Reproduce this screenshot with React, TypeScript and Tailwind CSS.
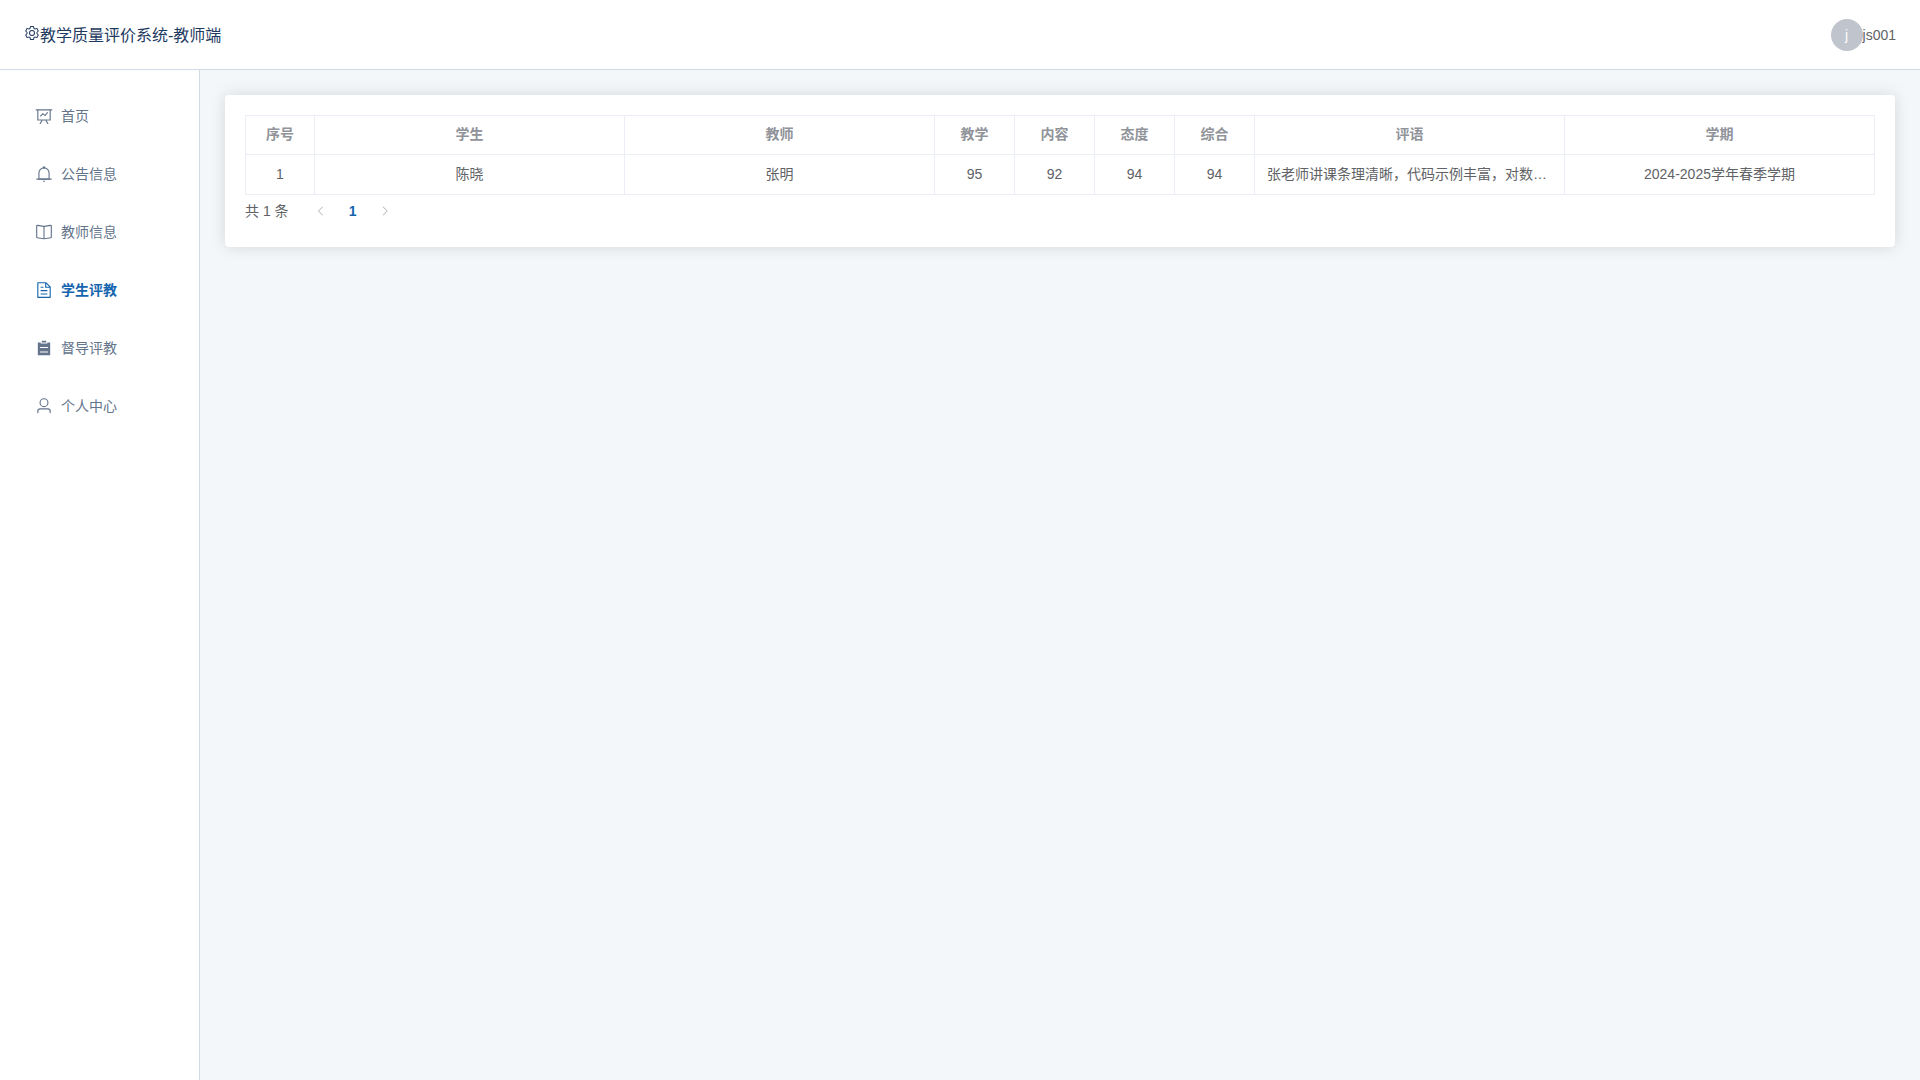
import type { ReactNode } from 'react'

interface IconProps {
  paths: string[]
  className?: string
}

interface MenuItem {
  label: string
  icon: string[]
  active?: boolean
}

interface Evaluation {
  id: number
  student: string
  teacher: string
  teaching: number
  content: number
  attitude: number
  overall: number
  comment: string
  term: string
}

const icons = {
  setting: [
    'M600.704 64a32 32 0 0 1 30.464 22.208l35.2 109.376c14.784 7.232 28.928 15.36 42.432 24.512l112.384-24.192a32 32 0 0 1 34.432 15.36L944.32 364.8a32 32 0 0 1-4.032 37.504l-77.12 85.12a357.12 357.12 0 0 1 0 49.024l77.12 85.248a32 32 0 0 1 4.032 37.504l-88.704 153.6a32 32 0 0 1-34.432 15.296L708.8 803.904c-13.44 9.088-27.648 17.28-42.368 24.512l-35.264 109.376A32 32 0 0 1 600.704 960H423.296a32 32 0 0 1-30.464-22.208L357.696 828.48a351.616 351.616 0 0 1-42.56-24.64l-112.32 24.256a32 32 0 0 1-34.432-15.36L79.68 659.2a32 32 0 0 1 4.032-37.504l77.12-85.248a357.12 357.12 0 0 1 0-48.896l-77.12-85.248A32 32 0 0 1 79.68 364.8l88.704-153.6a32 32 0 0 1 34.432-15.296l112.32 24.256c13.568-9.152 27.776-17.408 42.56-24.64l35.2-109.312A32 32 0 0 1 423.232 64H600.64zm-23.424 64H446.72l-36.352 113.088-24.512 11.968a294.113 294.113 0 0 0-34.816 20.096l-22.656 15.36-116.224-25.088-65.28 113.152 79.68 88.192-1.92 27.136a293.12 293.12 0 0 0 0 40.192l1.92 27.136-79.808 88.192 65.344 113.152 116.224-25.024 22.656 15.296a294.113 294.113 0 0 0 34.816 20.096l24.512 11.968L446.72 896h130.688l36.48-113.152 24.448-11.904a288.282 288.282 0 0 0 34.752-20.096l22.592-15.296 116.288 25.024 65.28-113.152-79.744-88.192 1.92-27.136a293.12 293.12 0 0 0 0-40.256l-1.92-27.136 79.808-88.128-65.344-113.152-116.288 24.96-22.592-15.232a287.616 287.616 0 0 0-34.752-20.096l-24.448-11.904L577.344 128zM512 320a192 192 0 1 1 0 384 192 192 0 0 1 0-384m0 64a128 128 0 1 0 0 256 128 128 0 0 0 0-256',
  ],
  dataLine: [
    'M359.168 768H160a32 32 0 0 1-32-32V192H64a32 32 0 0 1 0-64h896a32 32 0 1 1 0 64h-64v544a32 32 0 0 1-32 32H665.216l110.848 192h-73.856L591.36 768H433.024L322.176 960H248.32zM832 192H192v512h640zM342.656 534.656a32 32 0 1 1-45.312-45.312L444.992 341.76l125.44 94.08L679.04 300.032a32 32 0 1 1 49.92 39.936L581.632 524.224 451.008 426.24 342.656 534.592z',
  ],
  bell: [
    'M512 64a64 64 0 0 1 64 64v64H448v-64a64 64 0 0 1 64-64',
    'M256 768h512V448a256 256 0 1 0-512 0zm256-640a320 320 0 0 1 320 320v384H192V448a320 320 0 0 1 320-320',
    'M96 768h832q32 0 32 32t-32 32H96q-32 0-32-32t32-32m352 128h128a64 64 0 0 1-128 0',
  ],
  reading: [
    'm512 863.36 384-54.848v-638.72L525.568 222.72a96 96 0 0 1-27.136 0L128 169.792v638.72zM137.024 106.432l370.432 52.928a32 32 0 0 0 9.088 0l370.432-52.928A64 64 0 0 1 960 169.792v638.72a64 64 0 0 1-54.976 63.36l-388.48 55.488a32 32 0 0 1-9.088 0l-388.48-55.488A64 64 0 0 1 64 808.512v-638.72a64 64 0 0 1 73.024-63.36',
    'M480 192h64v704h-64z',
  ],
  document: [
    'M832 384H576V128H192v768h640zm-26.496-64L640 154.496V320zM160 64h480l256 256v608a32 32 0 0 1-32 32H160a32 32 0 0 1-32-32V96a32 32 0 0 1 32-32m160 448h384v64H320zm0-192h160v64H320zm0 384h384v64H320z',
  ],
  list: ['M704 192h160v736H160V192h160v64h384zM288 512h448v-64H288zm0 256h448v-64H288zm96-576V96h256v96z'],
  user: [
    'M512 512a192 192 0 1 0 0-384 192 192 0 0 0 0 384m0 64a256 256 0 1 1 0-512 256 256 0 0 1 0 512m320 320v-96a96 96 0 0 0-96-96H288a96 96 0 0 0-96 96v96a32 32 0 1 1-64 0v-96a160 160 0 0 1 160-160h448a160 160 0 0 1 160 160v96a32 32 0 1 1-64 0',
  ],
  arrowLeft: [
    'M609.408 149.376 277.76 489.6a32 32 0 0 0 0 44.672l331.648 340.352a29.12 29.12 0 0 0 41.728 0 30.592 30.592 0 0 0 0-42.752L339.264 511.936l311.872-319.872a30.592 30.592 0 0 0 0-42.688 29.12 29.12 0 0 0-41.728 0',
  ],
  arrowRight: [
    'M340.864 149.312a30.592 30.592 0 0 0 0 42.752L652.736 512 340.864 831.872a30.592 30.592 0 0 0 0 42.752 29.12 29.12 0 0 0 41.728 0L714.24 534.336a32 32 0 0 0 0-44.672L382.592 149.376a29.12 29.12 0 0 0-41.728 0',
  ],
}

const menu: MenuItem[] = [
  { label: '首页', icon: icons.dataLine },
  { label: '公告信息', icon: icons.bell },
  { label: '教师信息', icon: icons.reading },
  { label: '学生评教', icon: icons.document, active: true },
  { label: '督导评教', icon: icons.list },
  { label: '个人中心', icon: icons.user },
]

const evaluations: Evaluation[] = [
  {
    id: 1,
    student: '陈晓',
    teacher: '张明',
    teaching: 95,
    content: 92,
    attitude: 94,
    overall: 94,
    comment: '张老师讲课条理清晰，代码示例丰富，对数据结构',
    term: '2024-2025学年春季学期',
  },
]

// Columns without a width share what is left
const columns: { key: keyof Evaluation; title: string; width?: string }[] = [
  { key: 'id', title: '序号', width: 'w-[69px]' },
  { key: 'student', title: '学生' },
  { key: 'teacher', title: '教师' },
  { key: 'teaching', title: '教学', width: 'w-20' },
  { key: 'content', title: '内容', width: 'w-20' },
  { key: 'attitude', title: '态度', width: 'w-20' },
  { key: 'overall', title: '综合', width: 'w-20' },
  { key: 'comment', title: '评语' },
  { key: 'term', title: '学期' },
]

function Icon({ paths, className }: IconProps) {
  return (
    <svg viewBox="0 0 1024 1024" fill="currentColor" aria-hidden="true" className={className}>
      {paths.map((d) => (
        <path key={d} d={d} />
      ))}
    </svg>
  )
}

function Header() {
  return (
    <header className="flex h-[70px] items-center justify-between border-b border-[#cfdce8] bg-white px-6">
      <h1 className="flex items-center pt-0.5 text-base text-[#1e3a5f]">
        <Icon paths={icons.setting} className="mb-1.5 size-4" />
        教学质量评价系统-教师端
      </h1>
      <button type="button" className="flex items-center text-sm text-[#606266]">
        <span className="flex size-8 items-center justify-center rounded-full bg-[#c0c4cc] text-white">j</span>
        js001
      </button>
    </header>
  )
}

function Sidebar() {
  return (
    <nav className="w-[200px] shrink-0 border-r border-[#cfdce8] bg-white px-3 py-[21px]">
      <ul className="flex flex-col gap-2">
        {menu.map((item) => (
          <li key={item.label}>
            <a
              href="#"
              aria-current={item.active ? 'page' : undefined}
              className={`flex h-[50px] items-center gap-2 pl-[23px] text-sm ${
                item.active ? 'font-bold text-[#1565ae]' : 'text-[#64748b]'
              }`}
            >
              <Icon paths={item.icon} className="size-[18px]" />
              {item.label}
            </a>
          </li>
        ))}
      </ul>
    </nav>
  )
}

function EvaluationTable() {
  return (
    <table className="w-full table-fixed border-separate border-spacing-0 border-t border-l border-[#ebeef5] text-center text-sm">
      <thead>
        <tr>
          {columns.map((col) => (
            <th
              key={col.key}
              className={`h-[39px] border-r border-b border-[#ebeef5] px-3 pb-0.5 font-bold text-[#909399] ${col.width ?? ''}`}
            >
              {col.title}
            </th>
          ))}
        </tr>
      </thead>
      <tbody>
        {evaluations.map((row) => (
          <tr key={row.id}>
            {columns.map((col) => (
              <td key={col.key} className="h-10 truncate border-r border-b border-[#ebeef5] px-3 pb-0.5">
                {row[col.key]}
              </td>
            ))}
          </tr>
        ))}
      </tbody>
    </table>
  )
}

function PageButton({ label, children }: { label: string; children: ReactNode }) {
  return (
    <button
      type="button"
      aria-label={label}
      disabled
      className="flex size-8 items-center justify-center text-[#a8abb2]"
    >
      {children}
    </button>
  )
}

function Pagination() {
  return (
    <div className="flex h-8 items-center text-sm">
      <span className="mr-4">共 {evaluations.length} 条</span>
      <PageButton label="上一页">
        <Icon paths={icons.arrowLeft} className="size-3" />
      </PageButton>
      <button type="button" aria-current="page" className="size-8 font-bold text-[#1565ae]">
        1
      </button>
      <PageButton label="下一页">
        <Icon paths={icons.arrowRight} className="size-3" />
      </PageButton>
    </div>
  )
}

export default function App() {
  return (
    <div className="flex min-h-screen flex-col font-['Liberation_Sans','Noto_Sans_CJK_SC',sans-serif] text-[#606266]">
      <Header />
      <div className="flex flex-1">
        <Sidebar />
        <main className="min-w-0 flex-1 bg-[#f3f7fa] p-[25px]">
          <section className="rounded bg-white p-5 shadow-[0_0_16px_rgba(0,0,0,0.13)]">
            <EvaluationTable />
            <Pagination />
          </section>
        </main>
      </div>
    </div>
  )
}
